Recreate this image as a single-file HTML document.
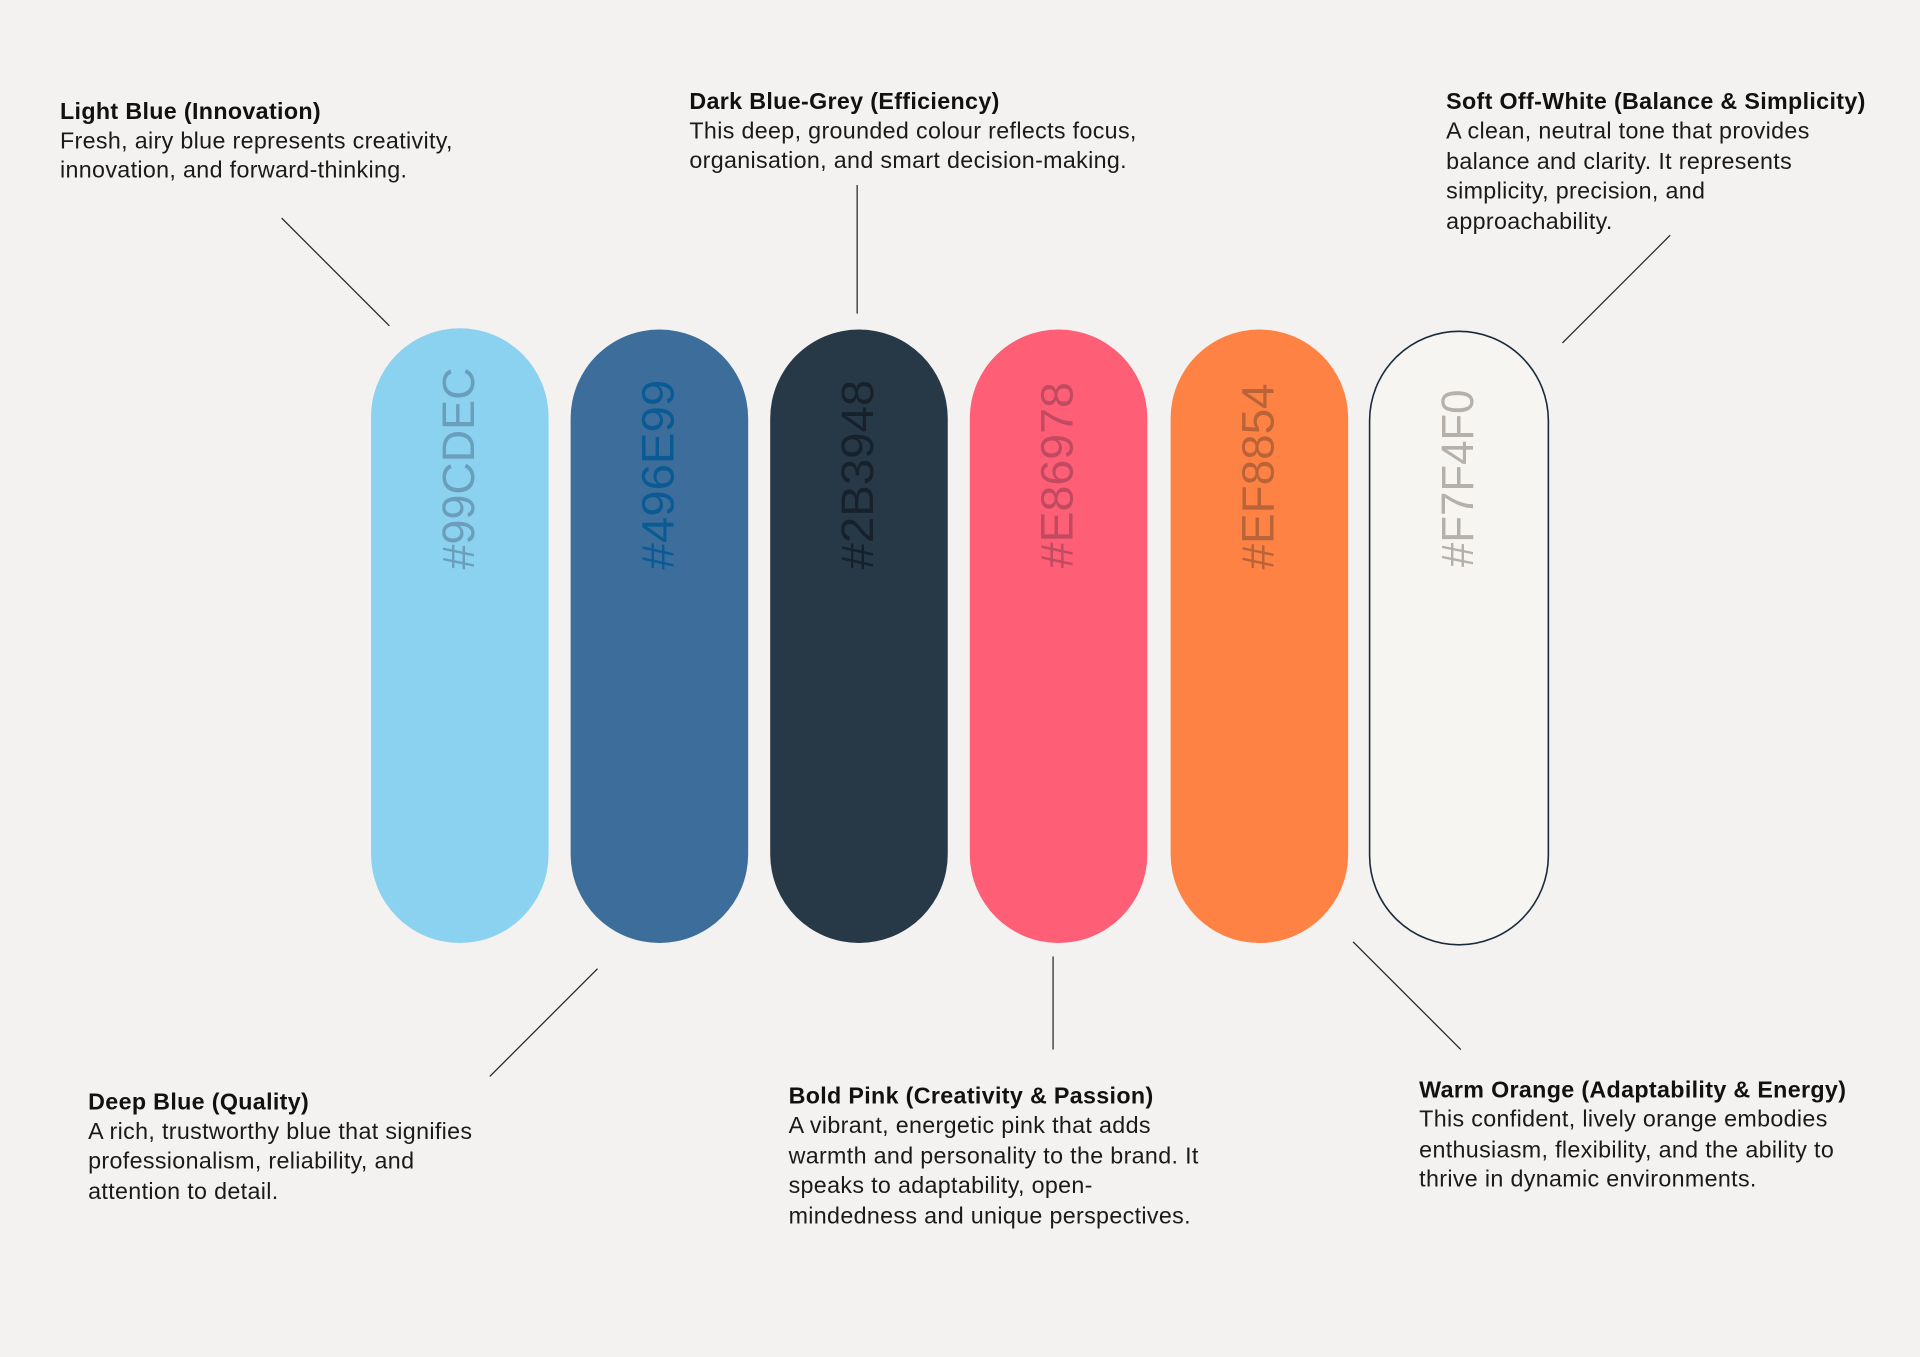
<!DOCTYPE html>
<html><head><meta charset="utf-8"><style>
html,body{margin:0;padding:0;background:#f3f2f0;}
svg{display:block}
.t{font-family:"Liberation Sans",sans-serif;font-size:19px;letter-spacing:0.28px;fill:#1a1a1a}
.b{font-weight:bold;fill:#111}
.h{font-family:"Liberation Sans",sans-serif;font-size:37px}
</style></head><body>
<svg width="1920" height="1357" viewBox="0 0 1568 1108" xmlns="http://www.w3.org/2000/svg">
<rect width="1568" height="1108" fill="#f3f2f0"/>
<g stroke="#222" stroke-width="1">
<line x1="230" y1="178" x2="318" y2="266"/>
<line x1="700" y1="151" x2="700" y2="256"/>
<line x1="1364" y1="192" x2="1276" y2="280"/>
<line x1="488" y1="791" x2="400" y2="879"/>
<line x1="860" y1="781" x2="860" y2="857"/>
<line x1="1105" y1="769" x2="1193" y2="857"/>
</g>
<rect x="303" y="268" width="145" height="502" rx="72.5" fill="#8bd1f0"/>
<rect x="466" y="269" width="145" height="501" rx="72.5" fill="#3d6e9b"/>
<rect x="629" y="269" width="145" height="501" rx="72.5" fill="#273947"/>
<rect x="792" y="269" width="145" height="501" rx="72.5" fill="#fe5e76"/>
<rect x="956" y="269" width="145" height="501" rx="72.5" fill="#ff8245"/>
<rect x="1118.5" y="270.5" width="146" height="501" rx="73" fill="#f7f5f1" stroke="#1b2a3a" stroke-width="1.3"/>
<text class="h" fill="#6a9ebb" transform="translate(387,465) rotate(-90)" textLength="165" lengthAdjust="spacingAndGlyphs">#99CDEC</text>
<text class="h" fill="#0a5a94" transform="translate(550,465) rotate(-90)" textLength="155" lengthAdjust="spacingAndGlyphs">#496E99</text>
<text class="h" fill="#16212c" transform="translate(713,465) rotate(-90)" textLength="155" lengthAdjust="spacingAndGlyphs">#2B3948</text>
<text class="h" fill="#c04a60" transform="translate(876,464) rotate(-90)" textLength="152" lengthAdjust="spacingAndGlyphs">#E86978</text>
<text class="h" fill="#b86338" transform="translate(1040,465) rotate(-90)" textLength="152" lengthAdjust="spacingAndGlyphs">#EF8854</text>
<text class="h" fill="#b5b0aa" transform="translate(1203,463) rotate(-90)" textLength="145" lengthAdjust="spacingAndGlyphs">#F7F4F0</text>

<text class="t b" x="49" y="97">Light Blue (Innovation)</text>
<text class="t" x="49" y="121">Fresh, airy blue represents creativity,</text>
<text class="t" x="49" y="145">innovation, and forward-thinking.</text>

<text class="t b" x="563" y="89">Dark Blue-Grey (Efficiency)</text>
<text class="t" x="563" y="113">This deep, grounded colour reflects focus,</text>
<text class="t" x="563" y="137">organisation, and smart decision-making.</text>

<text class="t b" x="1181" y="89">Soft Off-White (Balance &amp; Simplicity)</text>
<text class="t" x="1181" y="113">A clean, neutral tone that provides</text>
<text class="t" x="1181" y="138">balance and clarity. It represents</text>
<text class="t" x="1181" y="162">simplicity, precision, and</text>
<text class="t" x="1181" y="187">approachability.</text>

<text class="t b" x="72" y="906">Deep Blue (Quality)</text>
<text class="t" x="72" y="930">A rich, trustworthy blue that signifies</text>
<text class="t" x="72" y="954">professionalism, reliability, and</text>
<text class="t" x="72" y="979">attention to detail.</text>

<text class="t b" x="644" y="901">Bold Pink (Creativity &amp; Passion)</text>
<text class="t" x="644" y="925">A vibrant, energetic pink that adds</text>
<text class="t" x="644" y="950">warmth and personality to the brand. It</text>
<text class="t" x="644" y="974">speaks to adaptability, open-</text>
<text class="t" x="644" y="999">mindedness and unique perspectives.</text>

<text class="t b" x="1159" y="896">Warm Orange (Adaptability &amp; Energy)</text>
<text class="t" x="1159" y="920">This confident, lively orange embodies</text>
<text class="t" x="1159" y="945">enthusiasm, flexibility, and the ability to</text>
<text class="t" x="1159" y="969">thrive in dynamic environments.</text>
</svg>
</body></html>
